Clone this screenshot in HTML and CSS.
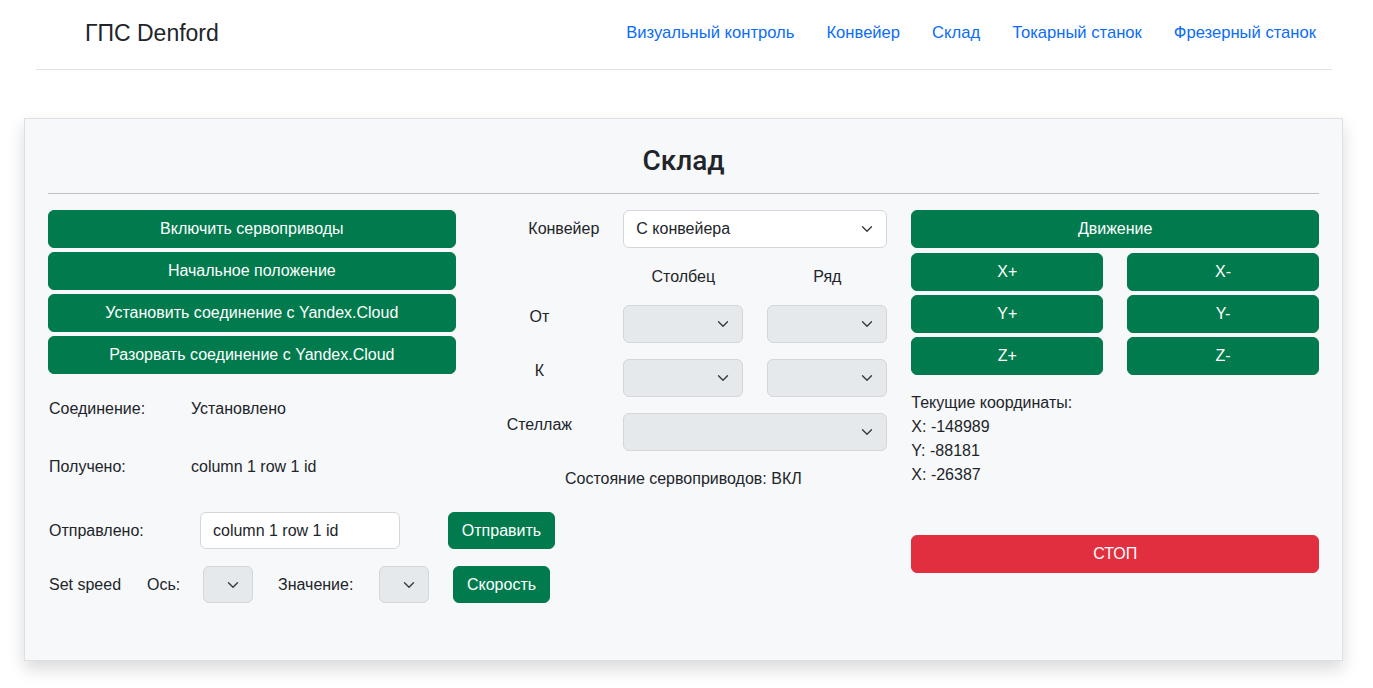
FILE: index.html
```html
<!DOCTYPE html>
<html lang="ru">
<head>
<meta charset="utf-8">
<title>ГПС Denford — Склад</title>
<link rel="stylesheet" href="styles.css">
</head>
<body>
<header class="topbar">
  <a class="brand" href="#"><span class="brand-icon"></span><span class="brand-text">ГПС Denford</span></a>
  <nav class="nav">
    <a class="nav-link" href="#">Визуальный контроль</a>
    <a class="nav-link" href="#">Конвейер</a>
    <a class="nav-link" href="#">Склад</a>
    <a class="nav-link" href="#">Токарный станок</a>
    <a class="nav-link" href="#">Фрезерный станок</a>
  </nav>
</header>

<main class="card">
  <h3 class="card-title">Склад</h3>
  <hr class="divider">
  <div class="columns">
    <section class="col col-left">
      <div class="btn-stack">
        <button class="btn btn-success btn-block">Включить сервоприводы</button>
        <button class="btn btn-success btn-block">Начальное положение</button>
        <button class="btn btn-success btn-block">Установить соединение с Yandex.Cloud</button>
        <button class="btn btn-success btn-block">Разорвать соединение с Yandex.Cloud</button>
      </div>
      <div class="info-row info-conn"><span class="info-label">Соединение:</span><span class="info-value">Установлено</span></div>
      <div class="info-row info-recv"><span class="info-label">Получено:</span><span class="info-value">column 1 row 1 id</span></div>
      <div class="send-row">
        <span class="send-label">Отправлено:</span>
        <input class="text-input" type="text" value="column 1 row 1 id">
        <button class="btn btn-success btn-send">Отправить</button>
      </div>
      <div class="speed-row">
        <span class="sp-title">Set speed</span>
        <span class="sp-axis">Ось:</span>
        <div class="select select-gray select-mini"><svg class="chev" viewBox="0 0 16 16"><path d="m2 5 6 6 6-6"/></svg></div>
        <span class="sp-value">Значение:</span>
        <div class="select select-gray select-mini"><svg class="chev" viewBox="0 0 16 16"><path d="m2 5 6 6 6-6"/></svg></div>
        <button class="btn btn-success btn-speed">Скорость</button>
      </div>
    </section>

    <section class="col col-mid">
      <div class="mid-grid">
        <label class="mid-label mid-label-conv">Конвейер</label>
        <div class="select select-white span-2"><span class="select-text">С конвейера</span><svg class="chev" viewBox="0 0 16 16"><path d="m2 5 6 6 6-6"/></svg></div>

        <span></span>
        <span class="col-head">Столбец</span>
        <span class="col-head">Ряд</span>

        <label class="mid-label">От</label>
        <div class="select select-gray"><svg class="chev" viewBox="0 0 16 16"><path d="m2 5 6 6 6-6"/></svg></div>
        <div class="select select-gray"><svg class="chev" viewBox="0 0 16 16"><path d="m2 5 6 6 6-6"/></svg></div>

        <label class="mid-label">К</label>
        <div class="select select-gray"><svg class="chev" viewBox="0 0 16 16"><path d="m2 5 6 6 6-6"/></svg></div>
        <div class="select select-gray"><svg class="chev" viewBox="0 0 16 16"><path d="m2 5 6 6 6-6"/></svg></div>

        <label class="mid-label">Стеллаж</label>
        <div class="select select-gray span-2"><svg class="chev" viewBox="0 0 16 16"><path d="m2 5 6 6 6-6"/></svg></div>

        <p class="status span-3">Состояние сервоприводов: ВКЛ</p>
      </div>
    </section>

    <section class="col col-right">
      <button class="btn btn-success btn-block">Движение</button>
      <div class="axis-grid">
        <button class="btn btn-success">X+</button>
        <button class="btn btn-success">X-</button>
        <button class="btn btn-success">Y+</button>
        <button class="btn btn-success">Y-</button>
        <button class="btn btn-success">Z+</button>
        <button class="btn btn-success">Z-</button>
      </div>
      <div class="coords">
        <div>Текущие координаты:</div>
        <div>X: -148989</div>
        <div>Y: -88181</div>
        <div>X: -26387</div>
      </div>
      <button class="btn btn-danger btn-block btn-stop">СТОП</button>
    </section>
  </div>
</main>
</body>
</html>
```

FILE: styles.css
```css
* { box-sizing: border-box; }

html, body {
  margin: 0;
  padding: 0;
  background: #ffffff;
}

body {
  font-family: "Liberation Sans", Arial, sans-serif;
  font-size: 16px;
  line-height: 1.5;
  color: #212529;
}

/* ---------- header ---------- */
.topbar {
  display: flex;
  align-items: center;
  margin: 0 41px 0 36px;
  padding: 13px 0 16px;
  border-bottom: 1px solid #dee2e6;
}

.brand {
  display: flex;
  align-items: center;
  margin-right: auto;
  color: #212529;
  text-decoration: none;
}

.brand-icon {
  display: inline-block;
  width: 40px;
  height: 32px;
  margin-right: 9px;
}

.brand-text {
  font-size: 23px;
  line-height: 40px;
}

.nav {
  display: flex;
}

.nav-link {
  display: block;
  padding: 8px 16px;
  color: #0b6cf7;
  text-decoration: none;
  line-height: 24px;
  font-size: 16.6px;
}

/* ---------- card ---------- */
.card {
  display: block;
  width: 1319px;
  margin: 48px 0 40px 24px;
  padding: 23px 23px 0;
  min-height: 543px;
  background: #f7f8fa;
  border: 1px solid #dcdfe3;
  box-shadow: 0 8px 16px rgba(0, 0, 0, 0.15);
}

.card-title {
  margin: 2px 0 0;
  font-family: Roboto, "Liberation Sans", sans-serif;
  font-size: 28px;
  font-weight: 500;
  line-height: 34px;
  text-align: center;
  color: #212529;
}

.divider {
  margin: 15px 0 16px;
  border: 0;
  border-top: 1px solid #bfc1c4;
  height: 0;
}

.columns {
  display: grid;
  grid-template-columns: repeat(3, minmax(0, 1fr));
  column-gap: 24px;
}

/* ---------- buttons ---------- */
.btn {
  display: inline-block;
  height: 38px;
  padding: 6px 12px;
  font-family: inherit;
  font-size: 16px;
  line-height: 24px;
  color: #ffffff;
  border: 1px solid transparent;
  border-radius: 6px;
  cursor: pointer;
  text-align: center;
  white-space: nowrap;
}

.btn-success {
  background: #017b4d;
  border-color: #017b4d;
}

.btn-danger {
  background: #e12f3f;
  border-color: #e12f3f;
}

.btn-block {
  display: block;
  width: 100%;
}

.btn-stack {
  display: flex;
  flex-direction: column;
  gap: 4px;
}

/* ---------- left column ---------- */
.info-row {
  display: grid;
  grid-template-columns: 142px 1fr;
  padding-left: 1px;
}

.info-conn { margin-top: 23px; }
.info-recv { margin-top: 34px; }

.send-row {
  display: flex;
  align-items: center;
  margin-top: 33px;
  padding-left: 1px;
}

.send-label { width: 151px; flex: none; }

.text-input {
  flex: none;
  width: 200px;
  height: 37px;
  padding: 6px 12px;
  font-family: inherit;
  font-size: 16px;
  line-height: 24px;
  color: #212529;
  background: #ffffff;
  border: 1px solid #d3d6da;
  border-radius: 6px;
}

.btn-send {
  flex: none;
  margin-left: 48px;
  width: 107px;
  height: 37px;
  padding: 5px 0;
}

.speed-row {
  display: flex;
  align-items: center;
  margin-top: 17px;
  padding-left: 1px;
}

.speed-row > * { flex: none; }

.sp-title { width: 98px; }
.sp-axis { width: 56px; }
.sp-value { width: 101px; margin-left: 25px; }

.btn-speed {
  margin-left: 24px;
  width: 97px;
  height: 37px;
  padding: 5px 0;
}

/* ---------- selects ---------- */
.select {
  display: flex;
  align-items: center;
  height: 38px;
  padding: 0 13px 0 12px;
  border: 1px solid #d3d6da;
  border-radius: 6px;
}

.select-white { background: #ffffff; }
.select-gray { background: #e6e9ec; }

.select-text { flex: 1; }

.select-mini {
  width: 50px;
  height: 37px;
}

.chev {
  width: 12px;
  height: 12px;
  margin-left: auto;
  flex: none;
}

.chev path {
  fill: none;
  stroke: #343a40;
  stroke-width: 1.8;
  stroke-linecap: round;
  stroke-linejoin: round;
}

/* ---------- middle column ---------- */
.mid-grid {
  display: grid;
  grid-template-columns: 120px 120px 120px;
  column-gap: 24px;
  row-gap: 16px;
  justify-content: end;
}

.mid-label {
  text-align: center;
  line-height: 24px;
}

.mid-label-conv {
  align-self: center;
  text-align: right;
}

.span-2 { grid-column: span 2; }
.span-3 { grid-column: 1 / -1; }

.col-head {
  text-align: center;
  margin-top: 1px;
}

.status {
  margin: 0;
  text-align: center;
}

/* ---------- right column ---------- */
.axis-grid {
  display: grid;
  grid-template-columns: 1fr 1fr;
  column-gap: 24px;
  row-gap: 4px;
  margin-top: 5px;
}

.coords {
  margin-top: 16px;
  line-height: 24px;
}

.btn-stop {
  margin-top: 48px;
}
```
